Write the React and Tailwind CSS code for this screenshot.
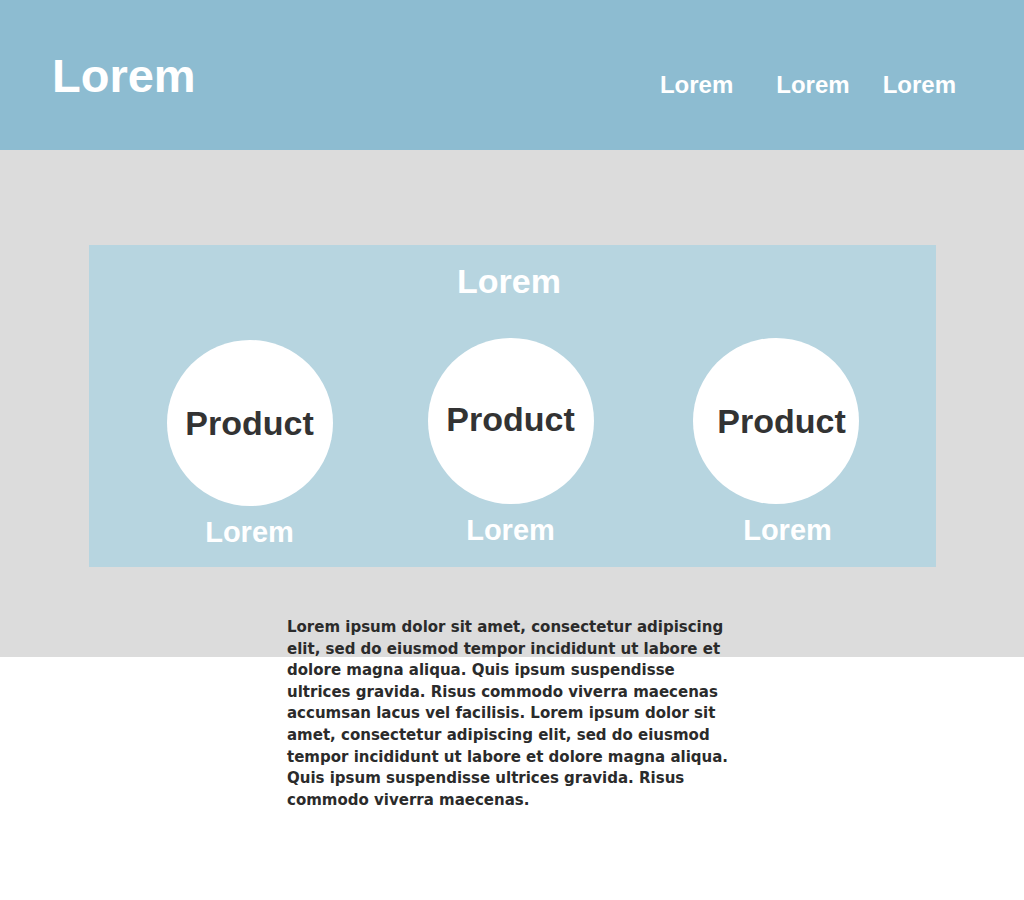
const items = [
    {id: 1, circle: "ml-[78px]", text: "", label: ""},
    {id: 2, circle: "ml-[95px] -mt-[2px]", text: "-mt-[4px]", label: "mt-[1px]"},
    {id: 3, circle: "ml-[99px] -mt-[2px]", text: "pl-[12px]", label: "ml-[24px] mt-[3px]"},
];

const App = () => {
    return (
        <div className="min-h-[900px] bg-white font-['Liberation_Sans',Arial,sans-serif] font-bold">
            <header className="h-[150px] bg-[#8dbcd1] flex items-start justify-between">
                <h1 className="text-white text-[47px] leading-none ml-[52px] mt-[52px]">Lorem</h1>
                <nav className="flex mt-[73px] mr-[68px] text-white text-[24px] leading-none">
                    <a className="mr-[43px]">Lorem</a>
                    <a className="mr-[33px]">Lorem</a>
                    <a>Lorem</a>
                </nav>
            </header>

            <main className="h-[507px] bg-[#dcdcdc] pt-[95px]">
                <section className="mx-auto w-[847px] h-[322px] bg-[#b7d5e0]">
                    <h2 className="text-white text-[34px] leading-none text-center pt-[19px] pr-[6px]">Lorem</h2>
                    <div className="flex mt-[42px]">
                        {items.map((item) => (
                            <div key={item.id} className={`flex flex-col items-center ${item.circle}`}>
                                <div className="w-[166px] h-[166px] rounded-full bg-white flex items-center justify-center">
                                    <span className={`text-[#333333] text-[34px] leading-none ${item.text}`}>Product</span>
                                </div>
                                <p className={`text-white text-[29px] leading-none mt-[12px] ${item.label}`}>Lorem</p>
                            </div>
                        ))}
                    </div>
                </section>

                <div className="w-[450px] mx-auto mt-[50px]">
                    <p className="w-[445px] font-['DejaVu_Sans',sans-serif] text-[#2b2b2b] text-[15px] leading-[21.6px]">
                        Lorem ipsum dolor sit amet, consectetur adipiscing elit, sed do eiusmod tempor incididunt ut labore et
                        dolore magna aliqua. Quis ipsum suspendisse ultrices gravida. Risus commodo viverra maecenas accumsan
                        lacus vel facilisis. Lorem ipsum dolor sit amet, consectetur adipiscing elit, sed do eiusmod tempor
                        incididunt ut labore et dolore magna aliqua. Quis ipsum suspendisse ultrices gravida. Risus commodo
                        viverra maecenas.
                    </p>
                </div>
            </main>
        </div>
    )
}

export default App;
